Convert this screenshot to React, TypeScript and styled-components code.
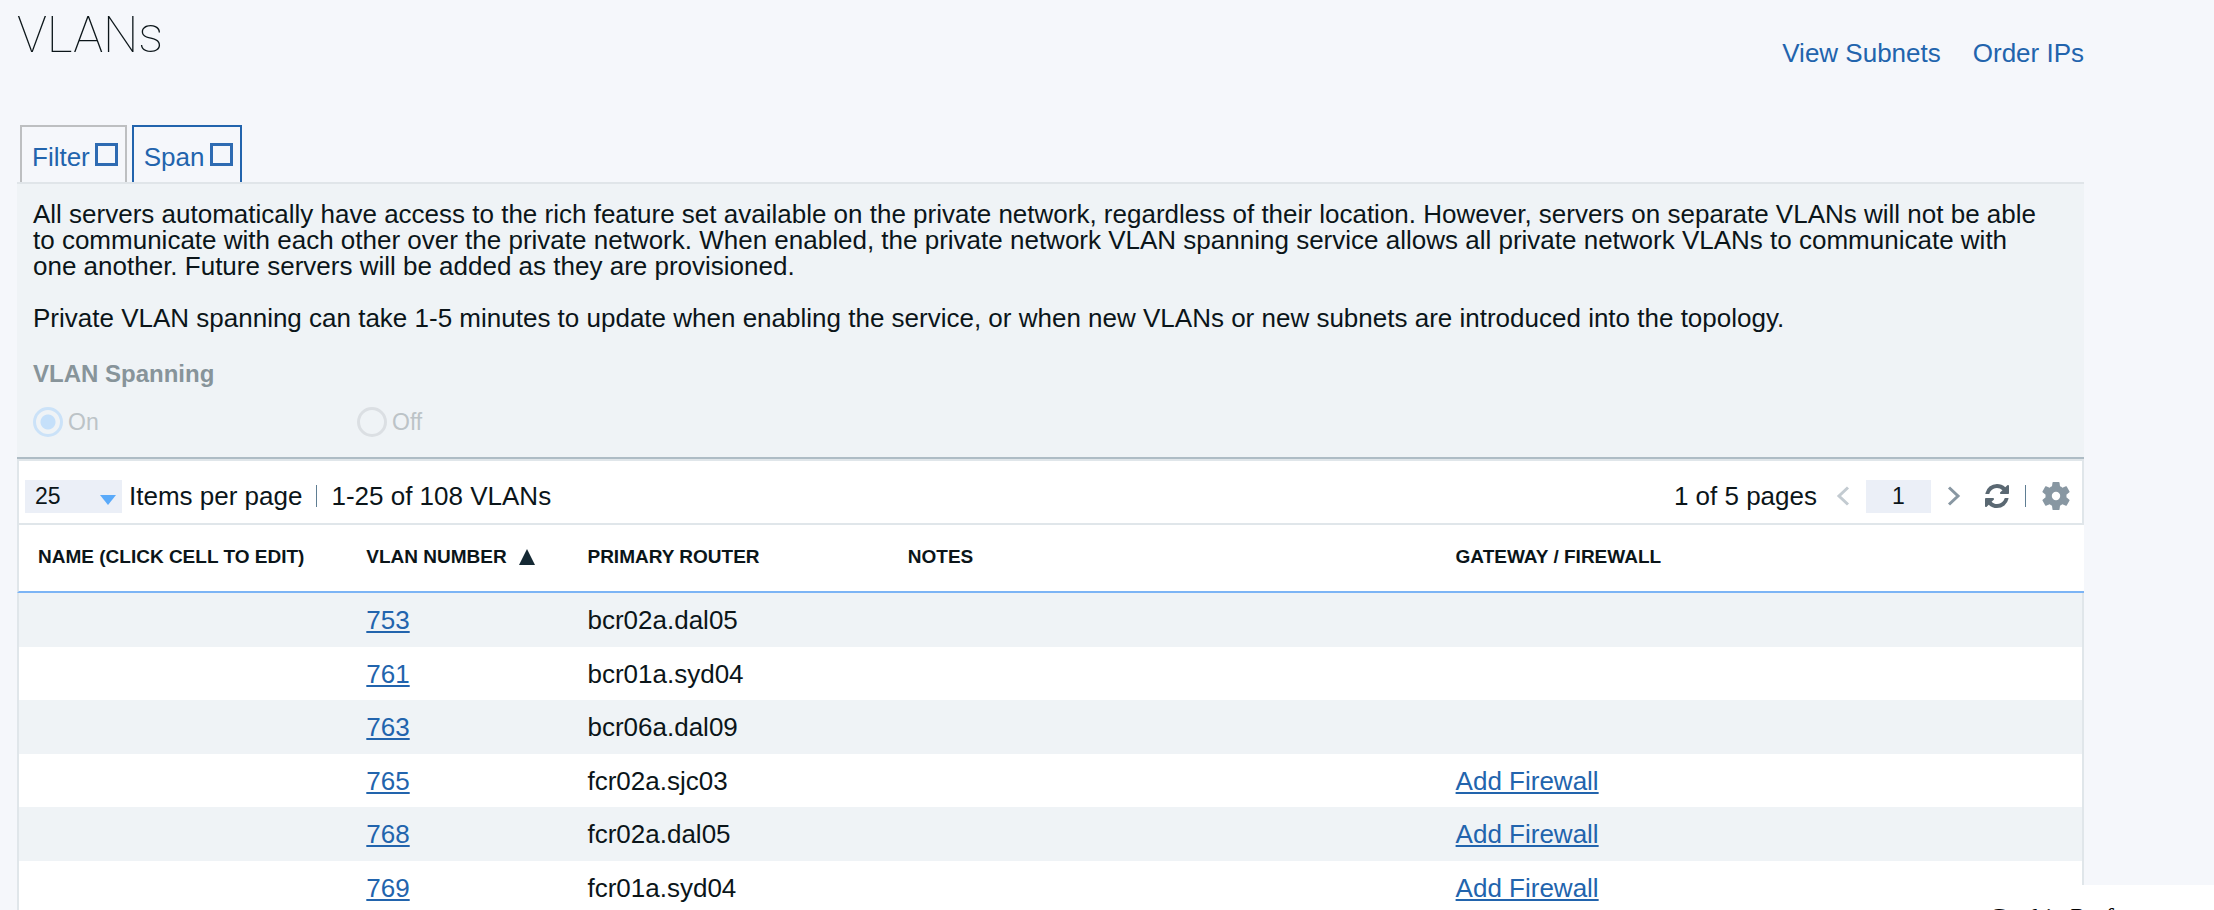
import React, { useState } from "react";
import styled, { createGlobalStyle } from "styled-components";

const GlobalStyle = createGlobalStyle`
  * { box-sizing: border-box; }
  html { background: #f5f7fb; overflow: hidden; }
  body {
    margin: 0;
    color: #0b1519;
    font: 26px/26px "Liberation Sans", Arial, sans-serif;
  }
  button, input, select { font: inherit; color: inherit; }
`;

const Page = styled.main`
  height: 100vh;
  overflow: hidden;
  padding: 0 130px 0 17px;
`;

const Header = styled.header`
  display: flex;
  justify-content: space-between;
  align-items: flex-end;
  height: 70px;
`;

const Title = styled.h1`
  margin: 0;
  font: 100 50px/70px Roboto, sans-serif;
`;

const Link = styled.a<{ $plain?: boolean }>`
  color: #2264ad;
  text-decoration: ${(p) => (p.$plain ? "none" : "underline")};
  text-decoration-thickness: 2px;
  text-underline-offset: 2px;
`;

const HeaderLinks = styled.nav`
  display: flex;
  gap: 32px;
  padding-bottom: 4px;
`;

const Tabs = styled.div`
  display: flex;
  gap: 5px;
  padding: 55px 0 0 3px;
`;

const Tab = styled.button<{ $active?: boolean }>`
  display: flex;
  align-items: center;
  gap: 5px;
  height: 57px;
  padding: 4px 7px 0 10px;
  border: 2px solid ${(p) => (p.$active ? "#2264ad" : "#bdbfc1")};
  border-bottom: 0;
  background: none;
  color: #2264ad;
`;

const TabBox = styled.span`
  width: 23px;
  height: 23px;
  margin-bottom: 4px;
  border: 3px solid #2e6bb2;
`;

const Panel = styled.section`
  padding: 17px 40px 20px 16px;
  border-top: 2px solid #e0e5e9;
  border-bottom: 2px solid #aebcc5;
  background: #eff3f6;
`;

const Text = styled.p`
  margin: 0 0 26px;
`;

const RadioGroup = styled.fieldset`
  display: flex;
  margin: 0;
  padding: 20px 0 0;
  border: 0;
  color: #bcc3c7;
  font-size: 23px;
`;

const Legend = styled.legend`
  padding: 4px 0 0;
  color: #87949a;
  font-size: 24px;
  font-weight: bold;
`;

const Option = styled.label`
  display: flex;
  align-items: center;
  gap: 5px;
  width: 324px;
  height: 30px;
`;

const Radio = styled.input`
  appearance: none;
  width: 30px;
  height: 30px;
  margin: 0;
  border: 3px solid #dbdfe3;
  border-radius: 50%;

  &:checked {
    border-color: #cbe2f8;
    background: radial-gradient(circle, #c5e0fa 0 7px, transparent 8px);
  }
`;

const Toolbar = styled.div`
  display: flex;
  align-items: center;
  justify-content: space-between;
  height: 66px;
  padding: 8px 12px 0 6px;
  border: 2px solid #e0e6ea;
  background: #fff;
`;

const Group = styled.div<{ $gap: number }>`
  display: flex;
  align-items: center;
  gap: ${(p) => p.$gap}px;
`;

const SelectWrap = styled.label`
  display: flex;
  align-items: center;
  gap: 7px;
`;

const PageSize = styled.select`
  appearance: none;
  width: 97px;
  height: 33px;
  padding: 0 10px;
  border: 0;
  border-radius: 0;
  font-size: 23px;
  background: #ebeff7
    url("data:image/svg+xml,%3Csvg xmlns='http://www.w3.org/2000/svg' width='16' height='10'%3E%3Cpath d='M0 0h16l-8 10z' fill='%235aaafa'/%3E%3C/svg%3E")
    no-repeat right 6px top 15px;
`;

const Rule = styled.span`
  width: 1px;
  height: 22px;
  background: #5f7e93;
`;

const PageInput = styled.input`
  width: 65px;
  height: 33px;
  padding: 0;
  border: 0;
  background: #ebeff7;
  text-align: center;
  font-size: 23px;
`;

const IconButton = styled.button`
  display: flex;
  padding: 0;
  border: 0;
  background: none;
`;

const Table = styled.table`
  width: 100%;
  table-layout: fixed;
  border-collapse: separate;
  border-spacing: 0;
`;

const Col = styled.col<{ $w?: number }>`
  ${(p) => (p.$w ? `width: ${p.$w}%;` : "")}
`;

const Th = styled.th`
  height: 68px;
  padding: 0 0 3px;
  border-bottom: 2px solid #7cb4f5;
  background: #fff;
  text-align: left;
  white-space: nowrap;
  font-size: 19px;

  &:first-child {
    padding-left: 19px;
    border-left: 2px solid #e0e6ea;
  }
`;

const SortButton = styled.button`
  display: flex;
  align-items: center;
  gap: 12px;
  padding: 0;
  border: 0;
  background: none;
  font-weight: bold;
`;

const Row = styled.tr`
  height: 53px;
  background: #fff;

  &:nth-child(odd) {
    height: 54px;
    background: #eff3f6;
  }
`;

const Td = styled.td`
  padding: 0;

  &:first-child { border-left: 2px solid #e0e6ea; }
  &:last-child { border-right: 2px solid #e0e6ea; }
`;

const CookieBar = styled.footer`
  position: fixed;
  right: 0;
  bottom: 0;
  width: 247px;
  height: 25px;
  padding: 18px 22px 0;
  overflow: hidden;
  background: #fff;
  white-space: nowrap;
  font: 26px/30px "Liberation Serif", "Times New Roman", serif;
`;

const CookieLink = styled.a`
  color: #000;
  text-decoration: none;
`;

const Chevron = ({ next }: { next?: boolean }) => (
  <svg width="14" height="20" viewBox="0 0 14 20" fill="none" stroke={next ? "#8897a2" : "#c3cbd1"} strokeWidth="3">
    <path d={next ? "M2 1.5l9 8.5-9 8.5" : "M12 1.5L3 10l9 8.5"} />
  </svg>
);

const RefreshIcon = () => (
  <svg width="24" height="24" viewBox="0 0 1536 1536" fill="#5a6872">
    <path d="M1511 928q0 5-1 7-64 268-268 434.500T764 1536q-146 0-282.500-55T238 1324l-129 129q-19 19-45 19t-45-19-19-45V960q0-26 19-45t45-19h448q26 0 45 19t19 45-19 45l-137 137q71 66 161 102t187 36q134 0 250-65t186-179q11-17 53-117 8-23 30-23h192q13 0 22.500 9.500t9.500 22.500zM1536 128v448q0 26-19 45t-45 19h-448q-26 0-45-19t-19-45 19-45l138-138Q969 256 768 256q-134 0-250 65T332 500q-11 17-53 117-8 23-30 23H50q-13 0-22.500-9.500T18 608v-7q65-268 270-434.500T768 0q146 0 284 55.500T1297 212l130-129q19-19 45-19t45 19 19 45z" />
  </svg>
);

const GearIcon = () => (
  <svg width="28" height="28" viewBox="2 2 20 20" fill="#8897a2">
    <path d="M19.430 12.980c.04-.32.07-.64.07-.98s-.03-.66-.07-.98l2.110-1.650c.19-.15.24-.42.12-.64l-2-3.460c-.12-.22-.39-.3-.61-.22l-2.490 1c-.52-.4-1.080-.73-1.690-.98l-.38-2.650C14.460 2.180 14.250 2 14 2h-4c-.25 0-.46.18-.49.42l-.38 2.650c-.61.25-1.170.59-1.690.98l-2.490-1c-.23-.09-.49 0-.61.22l-2 3.460c-.13.22-.07.49.12.64l2.110 1.650c-.04.32-.07.65-.07.98s.03.66.07.98l-2.110 1.650c-.19.15-.24.42-.12.64l2 3.460c.12.22.39.3.61.22l2.490-1c.52.4 1.080.73 1.690.98l.38 2.650c.03.24.24.42.49.42h4c.25 0 .46-.18.49-.42l.38-2.650c.61-.25 1.170-.59 1.690-.98l2.490 1c.23.09.49 0 .61-.22l2-3.460c.12-.22.07-.49-.12-.64l-2.110-1.650zM12 15a3 3 0 1 1 0-6 3 3 0 0 1 0 6z" />
  </svg>
);

const vlans = [
  { id: 753, router: "bcr02a.dal05" },
  { id: 761, router: "bcr01a.syd04" },
  { id: 763, router: "bcr06a.dal09" },
  { id: 765, router: "fcr02a.sjc03", firewall: true },
  { id: 768, router: "fcr02a.dal05", firewall: true },
  { id: 769, router: "fcr01a.syd04", firewall: true },
];

export default function App() {
  const [page, setPage] = useState("1");
  return (
    <>
      <GlobalStyle />
      <Page>
        <Header>
          <Title>VLANs</Title>
          <HeaderLinks>
            <Link $plain href="#subnets">View Subnets</Link>
            <Link $plain href="#order">Order IPs</Link>
          </HeaderLinks>
        </Header>
        <Tabs>
          <Tab type="button">Filter<TabBox /></Tab>
          <Tab type="button" $active>Span<TabBox /></Tab>
        </Tabs>
        <Panel>
          <Text>
            All servers automatically have access to the rich feature set available on the private network, regardless
            of their location. However, servers on separate VLANs will not be able to communicate with each other over
            the private network. When enabled, the private network VLAN spanning service allows all private network
            VLANs to communicate with one another. Future servers will be added as they are provisioned.
          </Text>
          <Text>
            Private VLAN spanning can take 1-5 minutes to update when enabling the service, or when new VLANs or new
            subnets are introduced into the topology.
          </Text>
          <RadioGroup disabled>
            <Legend>VLAN Spanning</Legend>
            <Option><Radio type="radio" name="spanning" defaultChecked />On</Option>
            <Option><Radio type="radio" name="spanning" />Off</Option>
          </RadioGroup>
        </Panel>
        <Toolbar>
          <Group $gap={14}>
            <SelectWrap>
              <PageSize defaultValue="25">
                <option>25</option>
                <option>50</option>
                <option>100</option>
              </PageSize>
              Items per page
            </SelectWrap>
            <Rule />
            <span>1-25 of 108 VLANs</span>
          </Group>
          <Group $gap={24}>
            <Group $gap={19}>
              <span>1 of 5 pages</span>
              <Group $gap={16}>
                <IconButton type="button" aria-label="Previous page" disabled><Chevron /></IconButton>
                <PageInput aria-label="Page" value={page} onChange={(e) => setPage(e.target.value)} />
                <IconButton type="button" aria-label="Next page"><Chevron next /></IconButton>
              </Group>
            </Group>
            <Group $gap={16}>
              <IconButton type="button" aria-label="Refresh"><RefreshIcon /></IconButton>
              <Rule />
              <IconButton type="button" aria-label="Settings"><GearIcon /></IconButton>
            </Group>
          </Group>
        </Toolbar>
        <Table>
          <colgroup>
            <Col $w={16.9} />
            <Col $w={10.7} />
            <Col $w={15.5} />
            <Col $w={26.5} />
            <Col />
          </colgroup>
          <thead>
            <tr>
              <Th>NAME (CLICK CELL TO EDIT)</Th>
              <Th aria-sort="ascending">
                <SortButton type="button">
                  VLAN NUMBER
                  <svg width="16" height="16" viewBox="0 0 16 16" fill="#152934"><path d="M8 0l8 16H0z" /></svg>
                </SortButton>
              </Th>
              <Th>PRIMARY ROUTER</Th>
              <Th>NOTES</Th>
              <Th>GATEWAY / FIREWALL</Th>
            </tr>
          </thead>
          <tbody>
            {vlans.map((v) => (
              <Row key={v.id}>
                <Td />
                <Td><Link href={`#vlan-${v.id}`}>{v.id}</Link></Td>
                <Td>{v.router}</Td>
                <Td />
                <Td>{v.firewall && <Link href={`#firewall-${v.id}`}>Add Firewall</Link>}</Td>
              </Row>
            ))}
          </tbody>
        </Table>
      </Page>
      <CookieBar><CookieLink href="#cookies">Cookie Preferences</CookieLink></CookieBar>
    </>
  );
}
